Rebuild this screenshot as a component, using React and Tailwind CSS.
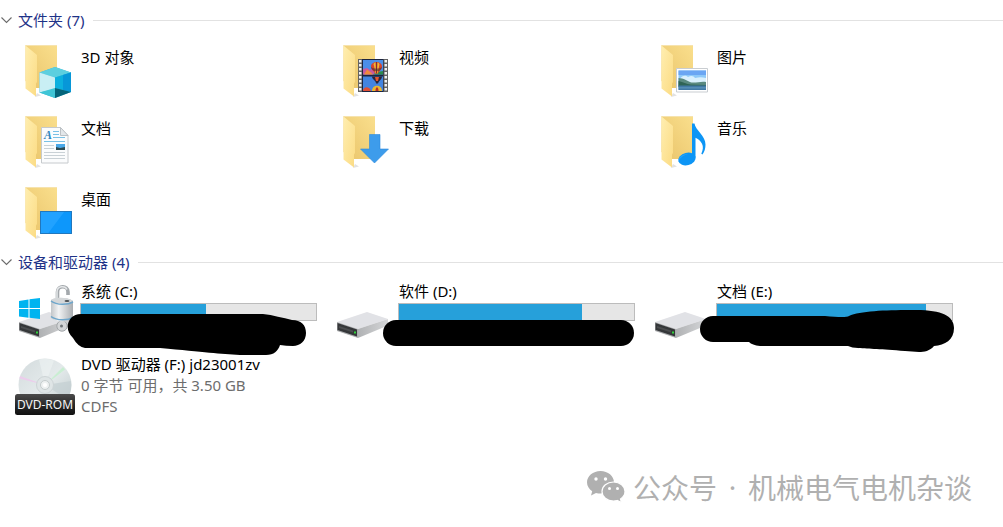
import { useState } from "react";

const FolderIcon = ({ id, children }) => (
  <svg viewBox="0 0 60 60" className="w-[60px] h-[60px] shrink-0" aria-hidden="true">
    <defs>
      <linearGradient id={`${id}-back`} x1="0" y1="1" x2="1" y2="0">
        <stop offset="0" stopColor="#e9c46a" />
        <stop offset="1" stopColor="#fadf8d" />
      </linearGradient>
      <linearGradient id={`${id}-flap`} x1="0" y1="0" x2="1" y2="1">
        <stop offset="0" stopColor="#ffeeb0" />
        <stop offset="1" stopColor="#fbdb83" />
      </linearGradient>
    </defs>
    <path d="M20 56l6-1.500-4-2.500z" fill="#e2e2e2" />
    <path d="M10.500 4H42v43H20l-9.500-7z" fill={`url(#${id}-back)`} />
    <path d="M10.500 4H42v1H11.500z" fill="#f6e3ae" />
    <path d="M10.500 4.500L22 14v27l-1 1.500V55.500L10.500 47.500z" fill={`url(#${id}-flap)`} />
    {children}
  </svg>
);

const CubeArt = () => (
  <>
    <path d="M40 26l16 5.500V51l-16 6-15.500-5.500v-20z" fill="#38b6d8" />
    <path d="M40 26l16 5.500-16 5-15.500-5z" fill="#5ccfdf" />
    <path d="M24.500 31.500l15.500 5V48l-15.500 3.500z" fill="#c9eff4" />
    <path d="M40 36.500l16-5V51l-16-4z" fill="#0cb0de" />
    <path d="M48 34l8-2.500V51l-8-2z" fill="#0797d8" />
    <path d="M24.500 51.500L40 47v10z" fill="#3fc5d6" />
    <path d="M40 47l16 4-16 6z" fill="#04647a" />
  </>
);

const holes = [19.5, 23.5, 27.5, 31.5, 35.5, 39.5, 43.5, 47.5];

const Balloon = ({ x, y }) => (
  <g transform={`translate(${x} ${y})`}>
    <path d="M0 5C0-1 11-1 11 5c0 3-3 4.500-4 7H4C3 9.500 0 8 0 5z" fill="#d9452b" />
    <path d="M2.500 2.500C3.500 6 4 9 4.500 12h2C7 9 8 6 8.500 2.500 7-.2 4-.2 2.500 2.500z" fill="#f2b632" />
    <path d="M4.700.5h1.600L6 12H5z" fill="#8c2633" />
    <path d="M0 5.500c3 2 8 2 11 0-.2 1.500-1 2.500-2 3.500-2 1-5 1-7 0-1-1-2-2-2-3.500z" fill="#3a2a35" opacity=".55" />
  </g>
);

const FilmArt = () => (
  <>
    <path d="M25 18h30v33H25z" fill="#636363" />
    {holes.map((y) => (
      <g key={y} fill="#f1f1f1">
        <path d={`M26 ${y - 0.5}h2.500v2.500H26z`} />
        <path d={`M51.500 ${y - 0.5}H54v2.500h-2.500z`} />
      </g>
    ))}
    <path d="M29 18h21.500v33H29z" fill="#1c2540" />
    <path d="M30 19H50v14.500H30z" fill="#4b8ee8" />
    <path d="M30 35.500H50V50H30z" fill="#4384e0" />
    <path d="M30 28l4-1 3 2 3-2 2 6.500H30z" fill="#c75aa0" />
    <path d="M31 33.500l3-5 4 3 2 2z" fill="#f08a3c" />
    <path d="M40 33.500l4-2.500 6-1v3.500z" fill="#2b8a4a" />
    <Balloon x={38} y={20.500} />
    <path d="M39 35.500h10c0 3-3 4-4 7h-2c0-3-4-4-4-7z" fill="#2d2638" />
    <path d="M42 36h4l-1 4h-2z" fill="#e4552f" />
    <path d="M39 50c0-7 10-7 10 0z" fill="#ecb62f" />
    <path d="M42.500 50c0-5 3-5 3 0z" fill="#b72f2c" />
    <path d="M30 50c0-5 7-5 8 0z" fill="#df4f36" />
  </>
);

const PictureArt = () => (
  <>
    <path d="M25.500 27.500h31V51h-31z" fill="#fff" stroke="#c9cdd1" />
    <path d="M27.500 29.500h27.500V49H27.500z" fill="#8ec9f8" />
    <path d="M27.500 29.500h27.500V34H27.500z" fill="#6ba6f3" />
    <path d="M29 38c2-4 6-4 8-2 3-2 6-1 7 1 4-1 7-1 11 0v6H29z" fill="#d9f0fd" />
    <path d="M27.500 37c5 0 9 3 13 4.500 5 .5 10-1.500 14.500-.5v4H27.500z" fill="#5a8a80" />
    <path d="M27.500 40c5 1 8 3 12 3.500l15.500.500v2H27.500z" fill="#2f6455" />
    <path d="M27.500 44.500H55V49H27.500z" fill="#4179a5" />
    <path d="M27.500 46.500H55v.800H27.500z" fill="#69a0c4" />
  </>
);

const DocumentArt = () => (
  <>
    <path d="M26.500 15.500h19l7.500 8V51H26.500z" fill="#fbfcfd" stroke="#c6cacd" />
    <path d="M45.500 15.500v8H53z" fill="#e3e7ea" stroke="#bcc1c5" />
    <path d="M38 19.500h6M38 22.500h6M38 25.500h12M29 29.500h21" stroke="#79c1e6" />
    <path d="M29 33.500h10M29 36.500h10M29 40.500h21M29 43.500h21M29 46.500h21" stroke="#c9d1d6" />
    <path d="M41 32h9v6h-9z" fill="#4aa8e8" />
    <path d="M41 35l4 1 5-1v3h-9z" fill="#2d4a52" />
    <text x="29" y="27" fontSize="12" fontStyle="italic" fontWeight="700" fill="#2e86bd" className="font-['Liberation_Serif',serif]">
      A
    </text>
  </>
);

const DownloadArt = () => (
  <path d="M36.500 22.500H47v14.500h8.500L41.500 51 27.500 37h9z" fill="#3d9ceb" stroke="#2b8add" strokeWidth=".6" />
);

const MusicArt = () => (
  <>
    <path d="M41 11.500h2.500c1 7 11 12 11 21 0 4-1 7-3 10l-1.200-.700c1.700-4 2.200-7 .7-10-1.500-3-4-5-6.500-6v20H41z" fill="#0d95f5" />
    <ellipse cx="36" cy="47" rx="8.800" ry="6.200" transform="rotate(-14 36 47)" fill="#0d95f5" />
    <path d="M28 48c0-4 5-6 9-6-4 1-7 3-9 6z" fill="#25a5fb" />
  </>
);

const DesktopArt = () => (
  <>
    <path d="M25 28h32v23H25z" fill="#0d97fb" />
    <path d="M25.500 28.500h24L33 50.500h-7.500z" fill="#21a2ff" />
    <path d="M25.500 28.500h31v22h-31z" fill="none" stroke="#2177bd" />
  </>
);

const DriveIcon = ({ id, system }) => (
  <svg viewBox="0 0 60 60" className="w-[60px] h-[60px] shrink-0" aria-hidden="true">
    <defs>
      <linearGradient id={`${id}-side`} x1="0" y1="0" x2="1" y2="0">
        <stop offset="0" stopColor="#b0b2b4" />
        <stop offset="1" stopColor="#d5d6d8" />
      </linearGradient>
      <linearGradient id={`${id}-steel`} x1="0" y1="0" x2="1" y2="0">
        <stop offset="0" stopColor="#c3c6c9" />
        <stop offset=".35" stopColor="#f2f3f4" />
        <stop offset="1" stopColor="#a9adb1" />
      </linearGradient>
    </defs>
    <path d="M4 41l30-10 21 7-30 10z" fill="#e1e2e6" />
    <path d="M25 48l30-10v6.500L25 57z" fill={`url(#${id}-side)`} />
    <path d="M4 41l21 7v9L4 50z" fill="#a9abad" />
    <path d="M4.500 42L24 48.500v7L4.500 49z" fill="#353739" />
    <path d="M6 45l14 4.500v2L6 47z" fill="#4b4d4f" />
    <path d="M21 50.500h2v2h-2z" fill="#2fd13a" />
    {system && (
      <>
        <path d="M4 20l9.500-1.500V27H4zM14.500 18.300L25 17v10H14.500zM4 28h9.500v8.800L4 35.500zM14.500 28H25v10l-10.500-1.300z" fill="#00b4f0" />
        <path d="M42.500 19V11c0-7 10.500-7 10.500 0v3" fill="none" stroke="#a3a8ac" strokeWidth="3.600" />
        <path d="M42 19V11c0-6 8-7 10-2.500" fill="none" stroke="#e5e7e9" strokeWidth="1.500" />
        <circle cx="47" cy="45" r="5.200" fill="#d4d6d8" stroke="#a2a6a9" />
        <circle cx="46.500" cy="45" r="1.500" fill="#72777b" />
        <path d="M36 19c5-3.500 17-2.500 22 1v18c-4 3.500-16 4-22-1z" fill={`url(#${id}-steel)`} />
        <path d="M36 19c5-3.500 17-2.500 22 1-5 3.500-17 3.500-22-1z" fill="#d4d7d9" />
        <path d="M36 20c6 4.500 17 4 22 1M36 35.500c6 4.500 17 4 22 1" fill="none" stroke="#6ea6cb" strokeWidth="1.500" />
        <ellipse cx="52" cy="20" rx="2.500" ry="1" fill="#484d52" />
      </>
    )}
  </svg>
);

const DiscIcon = () => (
  <svg viewBox="0 0 60 62" className="w-[60px] h-[62px] shrink-0" aria-hidden="true">
    <defs>
      <linearGradient id="disc-face" x1="0" y1="0" x2="1" y2="1">
        <stop offset="0" stopColor="#d3dbdd" />
        <stop offset=".5" stopColor="#e4eaeb" />
        <stop offset="1" stopColor="#bcc8ca" />
      </linearGradient>
      <linearGradient id="disc-label" x1="0" y1="0" x2="0" y2="1">
        <stop offset="0" stopColor="#4b4b4b" />
        <stop offset=".5" stopColor="#2a2a2a" />
        <stop offset="1" stopColor="#101010" />
      </linearGradient>
    </defs>
    <circle cx="30" cy="31" r="26.500" fill="url(#disc-face)" />
    <path d="M30 31L24 5.500a26 26 0 0 1 15 1z" fill="#eef3f3" opacity=".6" />
    <path d="M30 31L48 13l2 2.500z" fill="#c9eed2" />
    <path d="M30 31L5 22l-.700 2.500z" fill="#eccdec" />
    <path d="M30 31l26-4a26 26 0 0 1-4 18z" fill="#c3cfd1" opacity=".7" />
    <circle cx="30" cy="31" r="8.500" fill="#dfe5e6" stroke="#cdd4d6" />
    <circle cx="30" cy="31" r="4.500" fill="#eef1f1" stroke="#c5cccd" />
    <circle cx="30" cy="31" r="2" fill="#fff" />
    <rect x="0" y="40" width="60" height="21" rx="2.500" fill="url(#disc-label)" />
    <text x="30" y="55" textAnchor="middle" fontSize="12" fill="#f5f5f5">
      DVD-ROM
    </text>
  </svg>
);

const WeChatIcon = () => (
  <svg viewBox="0 0 38 32" className="w-[38px] h-8 shrink-0" fill="#b0b0b0" aria-hidden="true">
    <path d="M13.500 0C6 0 0 5 0 11.300c0 3.700 2 6.900 5.200 9L4 24.500l5-2.600c1.500.4 3 .6 4.500.6C21 22.500 27 17.500 27 11.300S21 0 13.500 0z" />
    <path
      d="M26.500 11C20 11 15 15.200 15 20.500S20 30 26.500 30c1.300 0 2.500-.2 3.700-.5l4.300 2-1-3.600c2.700-1.700 4.500-4.400 4.500-7.400C38 15.200 33 11 26.500 11z"
      stroke="#fff"
      strokeWidth="1.200"
    />
    <g fill="#fff">
      <circle cx="9" cy="8" r="1.700" />
      <circle cx="18.500" cy="8" r="1.700" />
      <circle cx="22.500" cy="17.500" r="1.500" />
      <circle cx="30.500" cy="17.500" r="1.500" />
    </g>
  </svg>
);

const folders = [
  { id: "objects", name: "3D 对象", Art: CubeArt },
  { id: "videos", name: "视频", Art: FilmArt },
  { id: "pictures", name: "图片", Art: PictureArt },
  { id: "documents", name: "文档", Art: DocumentArt },
  { id: "downloads", name: "下载", Art: DownloadArt },
  { id: "music", name: "音乐", Art: MusicArt },
  { id: "desktop", name: "桌面", Art: DesktopArt },
];

const drives = [
  {
    id: "c",
    name: "系统 (C:)",
    used: 53,
    system: true,
    marker:
      "M66 33H248C258 34 268 37 277 39 286 39 291 44 291 52S285 65 278 65Q271 65 265 64C263 70 259 74 251 74H225C205 73 190 71 145 67H70Q63 66 58 57C48 48 53 33 66 33z",
  },
  { id: "d", name: "软件 (D:)", used: 78, marker: "M63 39H288a13 13 0 0 1 0 26H63a13 13 0 0 1 0-26z" },
  {
    id: "e",
    name: "文档 (E:)",
    used: 89,
    marker:
      "M62 35H174Q195 37 198 35C209 30 234 29 259 29 289 28 303 34 303 47 303 59 294 64 283 65 279 70 273 71 268 71L254 70C229 68 219 68 207 67Q201 67 197 65H109Q101 64 98 61H62a13 13 0 0 1 0-26z",
  },
];

const Group = ({ title, count, children }) => {
  const [open, setOpen] = useState(true);

  return (
    <section>
      <div className="flex items-center gap-2">
        <button
          type="button"
          aria-expanded={open}
          onClick={() => setOpen(!open)}
          className="flex items-center gap-1.5 h-5 leading-5 text-[#1e3287] whitespace-nowrap"
        >
          <svg viewBox="0 0 12 12" className={open ? "w-3 h-3" : "w-3 h-3 -rotate-90"} aria-hidden="true">
            <path d="M1.500 3.500l5 5 5-5" fill="none" stroke="#6b6b6b" strokeWidth="1.100" />
          </svg>
          {title} ({count})
        </button>
        <div className="flex-1 h-px bg-[#e2e2e2]" />
      </div>
      {open && children}
    </section>
  );
};

const App = () => {
  return (
    <main className="bg-white text-black text-[15px] leading-[21px] pt-[10px] overflow-x-hidden font-['Noto_Sans','Noto_Sans_CJK_SC',sans-serif]">
      <Group title="文件夹" count={7}>
        <ul className="grid grid-cols-[repeat(auto-fill,318px)] gap-y-[11px] pl-[15px] pt-[11px] pb-[9px]">
          {folders.map(({ id, name, Art }) => (
            <li key={id} className="flex gap-1.5">
              <FolderIcon id={id}>
                <Art />
              </FolderIcon>
              <span className="pt-1.5">{name}</span>
            </li>
          ))}
        </ul>
      </Group>

      <Group title="设备和驱动器" count={4}>
        <ul className="grid grid-cols-[repeat(auto-fill,318px)] pl-[15px] pt-[9px]">
          {drives.map(({ id, name, used, system, marker }) => (
            <li key={id} className="relative flex gap-[5px] h-[73px]">
              <DriveIcon id={id} system={system} />
              <div className="w-[237px]">
                <p className="pl-px">{name}</p>
                <div
                  role="meter"
                  aria-label={name}
                  aria-valuemin={0}
                  aria-valuemax={100}
                  aria-valuenow={used}
                  className="mt-px h-[18px] border border-[#bcbcbc] bg-[#e6e6e6]"
                >
                  <div className="h-full bg-[#26a0da]" style={{ width: `${used}%` }} />
                </div>
              </div>
              <svg viewBox="0 0 318 80" className="absolute left-0 top-0 z-10 w-[318px] h-20" aria-hidden="true">
                <path d={marker} />
              </svg>
            </li>
          ))}
          <li className="flex gap-1.5 h-[73px]">
            <DiscIcon />
            <div className="whitespace-nowrap">
              <p>DVD 驱动器 (F:) jd23001zv</p>
              <p className="text-[#6d6d6d]">0 字节 可用，共 3.50 GB</p>
              <p className="text-[#6d6d6d]">CDFS</p>
            </div>
          </li>
        </ul>
      </Group>

      <footer className="flex items-center justify-end gap-2 h-10 mt-10 pr-[31px] text-[28px] leading-10 text-[#b0b0b0] font-['Noto_Sans_CJK_SC',sans-serif]">
        <WeChatIcon />
        <p className="flex">
          <span>公众号</span>
          <span className="w-[31px] text-center font-['Noto_Sans',sans-serif]">·</span>
          <span>机械电气电机杂谈</span>
        </p>
      </footer>
    </main>
  );
};

export default App;
